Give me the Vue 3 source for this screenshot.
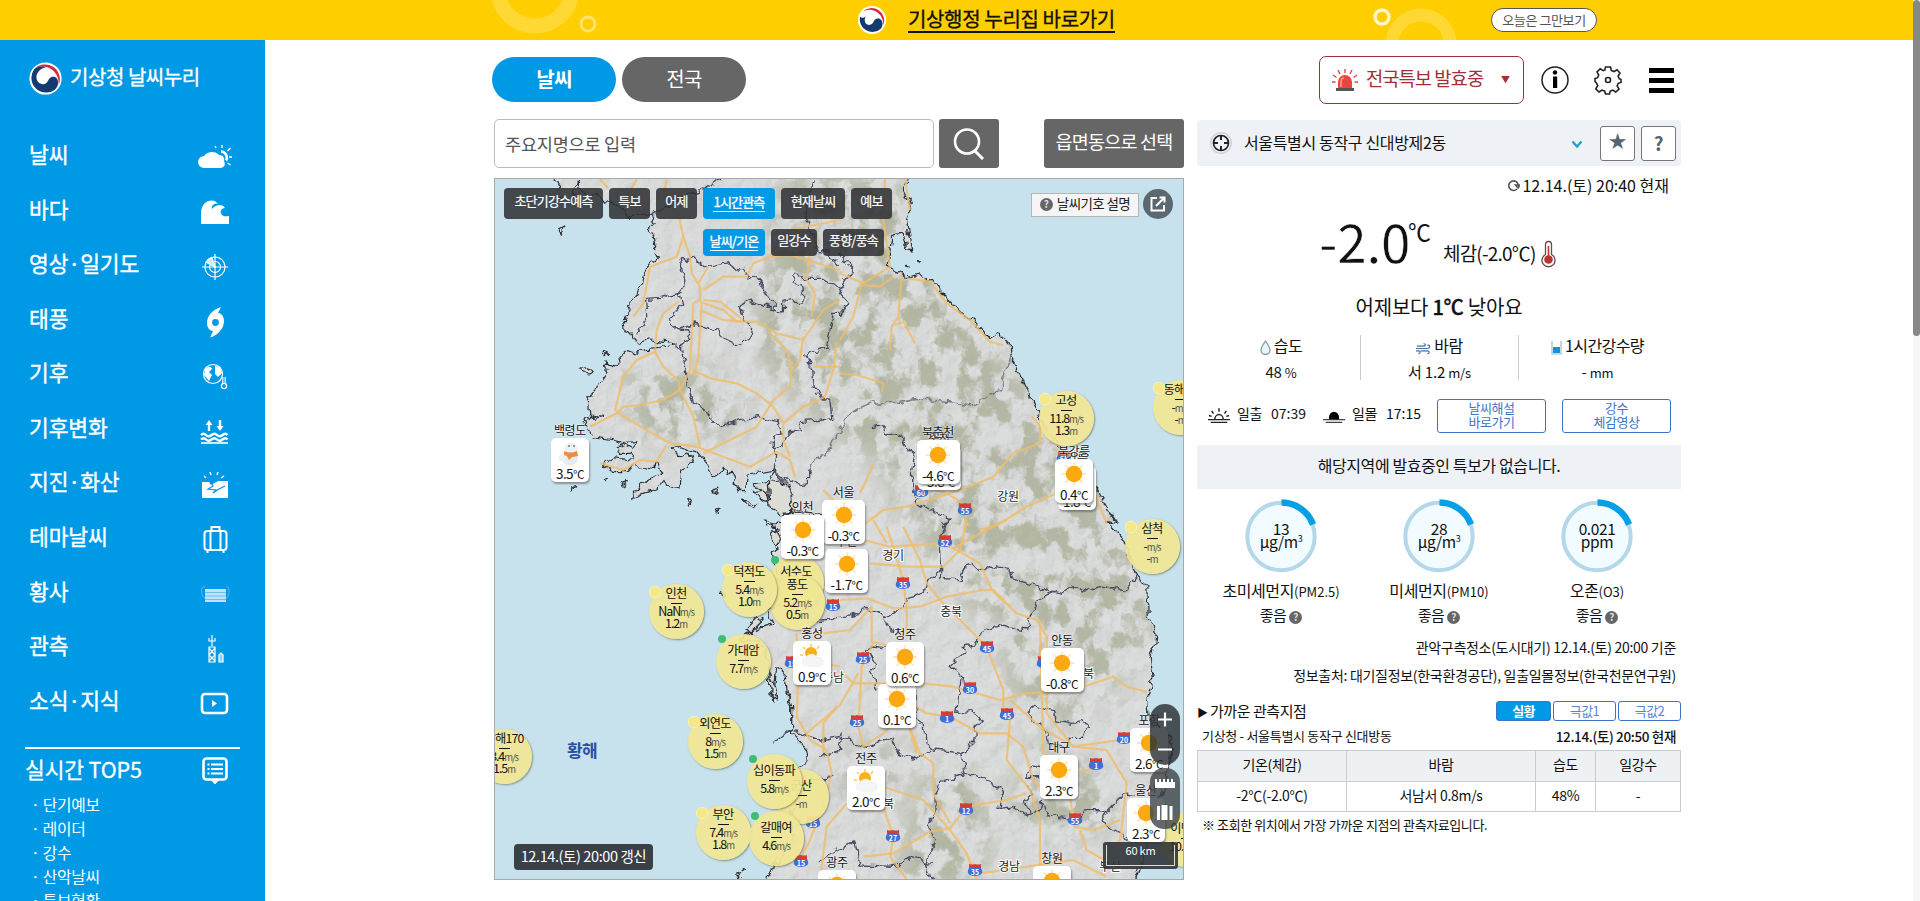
<script setup>
const menu = [
  ['날씨', 'weather'], ['바다', 'sea'], ['영상·일기도', 'radar'], ['태풍', 'typhoon'], ['기후', 'climate'],
  ['기후변화', 'change'], ['지진·화산', 'quake'], ['테마날씨', 'theme'], ['황사', 'dust'], ['관측', 'tower'], ['소식·지식', 'news'],
]
const top5 = ['단기예보', '레이더', '강수', '산악날씨', '특보현황']
const mapTabs = [['초단기강수예측', 99], ['특보', 41], ['어제', 41], ['1시간관측', 72], ['현재날씨', 64], ['예보', 41]]
const subTabs = [['날씨/기온', 62], ['일강수', 46], ['풍향/풍속', 61]]
const air = [
  { v: '13', u: 'μg/m', sup: '3', n: '초미세먼지', s: '(PM2.5)' },
  { v: '28', u: 'μg/m', sup: '3', n: '미세먼지', s: '(PM10)' },
  { v: '0.021', u: 'ppm', sup: '', n: '오존', s: '(O3)' },
]

// Each map line is traced in a 1/3 px quadrant grid; o is the quadrant origin on the page.
const NW = [490, 170], NE = [840, 170], SW = [490, 520], SE = [840, 520]
const tr = (o, s) => s.trim().split(/\s+/).map(p => {
  const [x, y] = p.split(',').map(Number)
  return (o[0] + x / 3).toFixed(1) + ',' + (o[1] + y / 3).toFixed(1)
}).join(' ')

const west =
  tr(NW, '195,20 210,50 195,62 203,82 240,88 262,50 265,35 275,65 300,72 330,75 345,95 380,100 400,125 420,145 440,132 470,135 497,140 475,180 490,200 495,225 492,240 505,265 480,285 460,310 455,345 440,370 420,400 412,430 400,450 405,480 425,490 430,505 445,520 480,510 530,515 550,520 540,528 480,535 440,550 415,540 395,560 375,585 345,575 352,605 325,640 312,665 298,690 303,738 345,742 315,748 300,735 280,765 310,800 370,810 400,818 440,815 432,835 410,822 385,830 388,850 430,850 425,868 370,860 335,880 370,905 415,905 430,885 480,900 500,880 512,910 455,940 425,985 500,955 525,925 530,950 570,960 575,900 610,880 600,850 570,860 550,840 565,830 620,845 650,880 670,920 685,915 700,895 725,910 745,965 765,965 775,915 855,900 835,930 785,940 830,970 850,1020 900,1035 905,1060') + ' ' +
  tr(SW, '850,10 870,60 850,100 860,160 880,250 830,270 850,310 790,330 750,360 810,370 840,430 835,490 850,540 860,440 885,460 890,510 905,560 905,640 950,690 955,720 920,740 930,800 900,900 910,960 850,1040 820,1095')
const east =
  tr(NE, '205,20 190,60 215,110 200,150 205,190 215,240 200,235 190,190 155,200 150,240 145,290 185,310 205,325 235,315 260,330 285,328 300,360 325,385 345,410 380,445 400,450 450,505 475,490 508,525 510,560 530,590 550,640 575,685 598,735 650,820 700,880 770,960 800,1010 835,1060') + ' ' +
  tr(SE, '800,5 850,60 870,110 890,160 920,200 925,290 948,340 945,370 930,410 940,470 920,540 925,600 985,640 1000,680 975,780 960,840 930,960 880,1095')
const land = west + ' ' + east.split(' ').reverse().join(' ')

const islands = [
  [NW, '265,600 285,590 310,605 300,612 280,605'], [NW, '342,545 355,550 345,560'], [NW, '205,180 222,170 212,190'],
  [NW, '340,930 355,925 350,935'], [NW, '395,940 415,935 400,947'], [NW, '665,965 685,950 680,970'], [NW, '590,992 603,990 597,1003'],
  [NW, '678,1020 690,1022 682,1030'], [NW, '755,990 800,1005 795,1015 765,1002'], [NW, '820,1050 860,1060 830,1065'],
  [NW, '242,950 260,947 245,957'], [NW, '835,935 870,930 900,960 902,1030 870,1035 840,1010'], [NW, '790,965 825,960 835,995 800,985'],
  [SW, '845,45 860,30 872,60 855,85'], [SW, '765,325 800,290 820,300 780,340'], [SW, '690,220 705,215 700,228'],
  [SW, '835,445 865,540 840,520'], [SW, '760,1045 768,1050 760,1055'], [SW, '740,1062 755,1065 745,1070'],
  [NE, '195,283 205,285 200,288'], [NE, '232,275 241,277 236,281'],
].map(([o, s]) => tr(o, s))

const borders = [
  [NW, '570,270 610,265 640,290 665,283 715,275 740,300 760,298 775,320 800,320 830,370 860,420 820,405 780,390 748,410 755,440 785,470 780,500 740,525 700,505 680,480 660,475 610,462 560,475 540,460 548,430 575,405 565,370 585,345 580,300 570,270'],
  [NW, '575,370 540,375 510,382 470,385 473,440 455,470 440,490'],
  [NW, '550,520 575,545 585,580 595,650 610,700 640,710 655,735 685,768 740,755 800,740 865,755 870,790 850,800 850,835 870,835 900,790 910,780 935,785 930,755 1000,750 1025,745 1020,690 1000,690 970,650 965,600 950,555 1010,530 1030,430 1050,430'],
  [NW, '860,425 880,425 882,390 905,385 920,400 940,400 935,350 905,335 915,312 950,325 1000,325 1050,360'],
  [NW, '560,475 590,480 597,505 575,520 575,545'],
  [NW, '690,28 640,60 590,75 550,105 500,125 480,137'],
  [NW, '970,28 945,130 970,200 985,245 1010,245 1050,290'],
  [NW, '855,840 850,900 880,925 930,945 955,940 957,900'], [NW, '850,905 900,950 905,1020 1000,1035 1050,1020'],
  [NE, '-5,250 40,300 10,340 0,365 25,400 0,430'],
  [NE, '95,770 125,765 140,795 180,790 195,830 225,855 215,900 215,960 235,1000 270,1020 330,1045 310,1080'],
  [SE, '310,0 320,20 300,60 305,150 305,175 360,180 375,135 395,130 420,155 460,140 510,145 515,175 560,190 640,215 670,220 700,200 730,213 780,200 820,210 850,210 890,165'],
  [SE, '305,150 260,185 255,215 200,235 190,265 135,295 105,270 75,265 30,290 -30,300 -100,310'], [SE, '135,295 145,325 165,335'],
  [SE, '640,215 600,235 575,275 560,330 530,325 490,315 420,335 415,370 370,378 375,400 330,435 365,470 355,530 350,580 390,575 430,600 405,625 405,660 365,700 330,695 280,690 255,670 250,610 230,600 225,520'],
  [SE, '140,385 100,378 80,385 105,430 95,460 110,510 135,490'],
  [SE, '-200,670 -150,630 -60,660 0,650 80,685 115,665 160,655 175,700 230,720 270,690'],
  [SE, '365,700 375,745 365,765 300,790 285,830 285,880 265,915 285,960 260,1030 275,1085'],
  [SE, '365,755 420,770 470,800 490,820 480,865 520,860 560,885 600,870 610,840 620,880 660,890 700,895 740,870 800,875 850,825 890,830'],
  [SE, '600,770 560,770 575,735 600,740'], [SE, '560,795 580,820 550,850 575,885'],
  [SE, '800,875 785,905 860,955 880,940'],
  [SE, '560,575 575,560 640,575 645,600 700,610 730,603 742,625 725,655 685,655 680,680 625,670 610,620 590,610 560,575'],
  [SE, '-60,1020 0,985 45,965 60,1035 180,1040 205,1010 270,1030'],
  [SW, '990,705 1040,700 1060,640'], [SW, '960,780 1010,775 1030,765'],
].map(([o, s]) => tr(o, s))
const dmz = tr(NW, '957,900 975,865 1005,855 1050,785') + ' ' + tr(NE, '0,780 20,740 60,715 90,700 180,697 240,687 300,692 400,705 430,685 480,660 490,620 510,560')

const roads = [
  [NW, '565,130 580,200 600,260 605,310 630,350 630,390 610,400 600,600 570,660 520,690 450,705 400,710 380,730 300,770'],
  [NW, '440,28 400,100'], [NW, '330,28 355,55'], [NW, '565,130 520,80 530,28'], [NW, '580,200 560,260 480,290 460,400 430,440'],
  [NW, '640,360 700,320 770,320 790,280 840,260 900,255 1050,300'], [NW, '625,340 655,290'], [NW, '840,255 900,180 1050,150'],
  [NW, '630,395 700,420 740,455 800,455 860,490 940,510 1000,420 1050,390'], [NW, '630,420 700,450 760,455'], [NW, '640,390 690,395 760,450'],
  [NW, '565,395 520,430 500,480 495,545 440,570 400,620 375,720 400,740 540,820 620,830 780,890 860,845 900,870 915,920'],
  [NW, '495,545 520,590 565,630 570,660 610,740 630,830'], [NW, '610,600 660,625 740,640 800,670 850,710 880,760 880,810 900,860'],
  [NW, '635,400 625,560 610,620'], [NW, '940,500 930,570 905,600 900,650 850,690 800,770 700,820 640,850'], [NW, '840,490 890,540 905,600'],
  [NW, '965,440 975,370 950,330 960,240'], [NW, '880,760 940,710 1005,680 1030,600 1040,520'], [NW, '970,590 1050,590'], [NW, '330,880 400,900 450,870 500,875 530,825'],
  [NE, '135,28 130,150 150,290 70,340 0,310'], [NE, '185,315 175,440 155,470 150,540'], [NE, '165,465 190,455 225,520'], [NE, '65,340 40,440 0,510'], [NE, '60,345 120,350 160,320'],
  [NE, '200,325 270,335 320,400 390,450 450,515 490,525'], [NE, '195,28 210,120'], [NE, '0,610 50,615 130,640 125,665'],
  [NE, '600,760 600,820 520,850 460,920 400,945 300,980 200,1010 130,1020 50,1080'], [NE, '575,740 650,820 760,960 800,1060'], [NE, '650,970 560,1010 480,1060 420,1080'], [NE, '240,945 330,975 380,1010 375,1080'], [NE, '100,885 60,970'],
  [SE, '500,0 440,30 340,85 300,70 150,80 70,60 0,60'], [SE, '380,0 360,90 310,140 200,140 90,130'], [SE, '190,20 240,120 260,190 300,240 370,310 440,380 490,510 490,560 510,600 500,720 570,810 600,900 600,1080'],
  [SE, '340,85 420,130 455,210 530,280 590,300 620,350 620,580 700,680 800,690 860,790 850,880 840,960 780,1030'],
  [SE, '0,240 80,235 160,265 240,260 320,230 430,210 460,210 510,260'], [SE, '140,20 190,180 200,270 200,340'], [SE, '100,0 140,70'],
  [SE, '-50,340 30,330 95,260 95,365 140,375'], [SE, '100,370 65,440 55,620 70,680 130,640 170,600 200,600 240,700 280,730 280,820 330,910'],
  [SE, '0,450 40,490 110,490 250,490 340,500 480,540 560,520 700,510 820,470 860,500 920,515'],
  [SE, '55,460 0,555 -100,640'], [SE, '160,520 260,580 330,590 420,640 500,640 550,680 580,780 600,800'],
  [SE, '510,540 600,620 700,680 840,660'], [SE, '600,300 610,700 700,760 780,740'], [SE, '130,800 250,840 330,930 380,1000 410,1080'], [SE, '70,1010 160,1000 270,935 330,925 380,860 500,840 560,820'],
  [SE, '230,700 190,560 140,500'], [SE, '20,850 -40,920 -60,1080'], [SE, '130,860 160,950 150,1010 200,1078'],
  [SE, '700,900 690,830 700,770'], [SE, '700,920 760,930 840,900'], [SE, '420,1060 560,1040 700,1020 800,1070'], [SE, '720,930 740,990 830,1040'],
  [SW, '920,340 925,460 920,590 960,660 1010,690 1025,760 1000,860 960,960 930,1020'], [SW, '1040,560 1000,610 1000,700'], [SW, '1050,440 960,420'], [NW, '1000,960 1050,1010'],
].map(([o, s]) => tr(o, s))

const shields = [
  [945, 541, '52'], [903, 583, '35'], [863, 658, '25'], [987, 647, '45'], [970, 688, '30'], [947, 717, '1'], [1007, 714, '45'], [857, 721, '25'],
  [1124, 738, '20'], [1096, 764, '1'], [966, 809, '12'], [1075, 819, '55'], [893, 836, '27'], [975, 870, '35'], [921, 491, '60'], [965, 509, '55'],
  [833, 605, '15'], [792, 662, '15'], [813, 822, '15'], [801, 861, '15'], [1044, 662, '5'], [1064, 457, '65'],
]
const regions = [[1008, 497, '강원'], [893, 556, '경기'], [951, 612, '충북'], [1083, 674, '경북'], [883, 804, '전북'], [833, 678, '충남'], [1009, 867, '경남'], [1110, 867, '부산']]
const buoys = [
  { x: 796, y: 582, n: '서수도', l: [], g: 1 }, { x: 797, y: 602, n: '풍도', l: [['5.2', 'm/s'], ['0.5', 'm']], h: 1 },
  { x: 749, y: 589, n: '덕적도', l: [['5.4', 'm/s'], ['1.0', 'm']] }, { x: 676, y: 611, n: '인천', l: [['NaN', 'm/s'], ['1.2', 'm']] },
  { x: 743, y: 661, n: '가대암', l: [['7.7', 'm/s']], g: 1 }, { x: 715, y: 741, n: '외연도', l: [['8', 'm/s'], ['1.5', 'm']] },
  { x: 504, y: 756, n: '남해170', l: [['3.4', 'm/s'], ['1.5', 'm']] }, { x: 801, y: 796, n: '군산', l: [['-', 'm']], h: 1 },
  { x: 774, y: 781, n: '십이동파', l: [['5.8', 'm/s']], g: 1 }, { x: 723, y: 832, n: '부안', l: [['7.4', 'm/s'], ['1.8', 'm']] },
  { x: 776, y: 838, n: '갈매여', l: [['4.6', 'm/s']], g: 1 }, { x: 1066, y: 418, n: '고성', l: [['11.8', 'm/s'], ['1.3', 'm']] },
  { x: 1180, y: 407, n: '동해78', l: [['-', 'm/s'], ['-', 'm']] }, { x: 1152, y: 546, n: '삼척', l: [['-', 'm/s'], ['-', 'm']] },
  { x: 1186, y: 839, n: '이덕서', l: [['10.1', 'm/s']], h: 1 },
]
const cities = [
  { x: 570, y: 438, n: '백령도', t: '3.5', i: 'snow' }, { x: 939, y: 446, n: '춘천', t: '-3.8', w: 43 }, { x: 938, y: 440, n: '북춘천', t: '-4.6', w: 43 },
  { x: 1077, y: 466, n: '강릉', t: '1.8' }, { x: 1074, y: 459, n: '북강릉', t: '0.4' },
  { x: 846.5, y: 549, n: '수원', t: '-1.7', w: 43 }, { x: 843.5, y: 500, n: '서울', t: '-0.3', w: 43 }, { x: 802.5, y: 515, n: '인천', t: '-0.3', w: 43 },
  { x: 812, y: 641, n: '홍성', t: '0.9', i: 'cloud' }, { x: 897, y: 684, n: '', t: '0.1' }, { x: 905, y: 642, n: '청주', t: '0.6' },
  { x: 1062, y: 648, n: '안동', t: '-0.8', w: 43 }, { x: 866, y: 766, n: '전주', t: '2.0', i: 'cloud' }, { x: 1059, y: 755, n: '대구', t: '2.3' },
  { x: 1149, y: 728, n: '포항', t: '2.6' }, { x: 1146, y: 798, n: '울산', t: '2.3' }, { x: 1052, y: 866, n: '창원', t: '3.1' }, { x: 837, y: 870, n: '광주', t: '2.2' },
]
const at = (p) => ({ left: p.x - 495 + 'px', top: p.y - 179 + 'px' })
</script>

<template>
  <div class="page">
    <header class="banner">
      <svg class="deco" width="1913" height="40" fill="none">
        <circle cx="535" cy="-11" r="37" stroke="#ffd833" stroke-width="15" /><circle cx="588" cy="24" r="7" stroke="#ffe36e" stroke-width="3" />
        <circle cx="1382" cy="17" r="7" stroke="#fff6ce" stroke-width="3.400" /><circle cx="1421" cy="44" r="29" stroke="#ffd833" stroke-width="13" />
      </svg>
      <svg class="blogo" viewBox="0 0 40 40"><circle cx="20" cy="20" r="20" fill="#fff" /><circle cx="20" cy="20" r="18" fill="#fff" /><path d="M6 9A18 18 0 0 1 36 28C37 17 30 8 21 6 15 4.500 9 6 6 9Z" fill="#d7263d" /><path d="M3 15A18 18 0 0 0 33 32C38 24 33 16 27 18c-6 2-4 9-11 9-6 0-8-7-5-12-4 3-6 2-8 0Z" fill="#143a70" /></svg>
      <span class="btitle">기상행정 누리집 바로가기</span>
      <button class="today">오늘은 그만보기</button>
    </header>

    <div class="body">
      <aside class="side">
        <div class="brand">
          <svg viewBox="0 0 40 40" width="33" height="33"><circle cx="20" cy="20" r="19.500" fill="#fff" /><path d="M6 9A18 18 0 0 1 36 28C37 17 30 8 21 6 15 4.500 9 6 6 9Z" fill="#d7263d" /><path d="M6 9A18 18 0 0 0 31 34C39 27 35 16 28 18c-6 2-4 9-11 9-6 0-10-7-7-13 2-4 6-7 11-8C15 4.500 9 6 6 9Z" fill="#143a70" /></svg>
          <span>기상청 날씨누리</span>
        </div>
        <nav>
          <a v-for="[t, k] in menu" :key="k">
            <span>{{ t }}</span>
            <svg viewBox="0 0 36 32" width="36" height="32" fill="none" stroke="#fff" stroke-width="2">
              <g v-if="k === 'weather'"><path d="M7 27a6 6 0 0 1 0-12 9 8 0 0 1 15-1c4 0 6 3 5 6 2 4 0 7-4 7Z" fill="#fff" stroke="none" /><path d="M24 10.500a6 6 0 0 1 5 9" stroke-width="2.600" /><path d="M25 7V4M30.500 10l3-3M32 16h3M30.500 22l3 2M19 7l-1-2" stroke-width="1.400" /></g>
              <path v-else-if="k === 'sea'" d="M4 28V16C5 7 11 3 18 5l3 3c-3-1-7 1-6 5 4-5 11-5 13-1-3 0-6 3-3 7 2 2 5 1 7 1v8Z" fill="#fff" stroke="none" />
              <g v-else-if="k === 'radar'" stroke-width="1.200"><circle cx="18" cy="17" r="10" /><circle cx="18" cy="17" r="5.500" /><path d="M18 4v26M5 17h26" /><path d="M18 17 9 12c2-3 4-4 6-4Z" fill="#cfeafa" /></g>
              <g v-else-if="k === 'typhoon'" stroke="none"><path d="M24 2C15 5 10 11 10 18c0 6 4 8 6 8l-3 7c10-4 14-11 14-17 0-5-3-8-6-8Z" fill="#fff" /><circle cx="18.500" cy="17.500" r="3.400" fill="#0099e5" /></g>
              <g v-else-if="k === 'climate'"><circle cx="16" cy="15" r="9.500" stroke-width="1.200" /><path d="M8 10c3-3 6-3 7 0l-3 3 3 3-3 6-5-6ZM18 7l5 1 2 6-4 4-3-3Z" fill="#fff" stroke="none" /><path d="M27 18v8" stroke-width="3.500" /><path d="M27 18v8" stroke="#0099e5" stroke-width="1.200" /><circle cx="27" cy="27" r="2.600" stroke-width="1.200" fill="#0099e5" /></g>
              <g v-else-if="k === 'change'"><path d="M12 17V9M23 6v7" stroke-width="2.400" /><path d="M8.500 11 12 6l3.500 5ZM19.500 12l3.500 5 3.500-5Z" fill="#fff" stroke="none" /><path d="M4 21q2.500-2.500 5 0t5.500 0 5.500 0 5.500 0 5 0M4 25.500q2.500-2.500 5 0t5.500 0 5.500 0 5.500 0 5 0" stroke-width="2.400" /><path d="M4 29h27" stroke-width="1.600" /></g>
              <g v-else-if="k === 'quake'"><path d="M5 14h7l2 3 7-4h10v17H5Z" fill="#fff" stroke="none" /><path d="m13 13 3 5-5 3 8 1-3 3 6-4 6-3" stroke="#0099e5" stroke-width="1.200" /><path d="m9 10-2-2M14 7l-1-3M20 7l1-3M24 10l3-2" stroke-width="1.400" /></g>
              <g v-else-if="k === 'theme'"><rect x="7.500" y="8" width="22" height="19" rx="3" /><path d="M13.500 8v19M23.500 8v19M14.500 8V4h8v4M10.500 28v2M26.500 28v2" /></g>
              <g v-else-if="k === 'dust'"><path d="M8 12h21v13H8Z" fill="#bfe3f8" stroke="none" /><path d="M8 15.500h21M8 19h21M8 22.500h21" stroke="#6ebfee" stroke-width="1" /><path d="M8 10c-5-3-4 11 0 11M29 10c4-3 4 11 0 11" stroke="#5bb8ee" stroke-width="1" /></g>
              <g v-else-if="k === 'tower'" stroke-width="1.200"><path d="M15 3v11M12 6v3h6V6M12 15h6v15h-6ZM12 16l6 7-6 6M18 16l-6 7 6 6" /><path d="M22 30v-7l2-2 2 2v7Z" fill="#8fd0f5" /></g>
              <g v-else><rect x="5" y="8" width="25" height="19" rx="3" stroke-width="2.600" /><path d="m15 14 5 3.500-5 3.500Z" fill="#fff" stroke="none" /></g>
            </svg>
          </a>
        </nav>
        <div class="top5">
          <div class="tt"><span>실시간 TOP5</span>
            <svg width="28" height="28" viewBox="0 0 28 28" fill="none" stroke="#fff" stroke-width="2.600"><rect x="2.500" y="1.500" width="23" height="21" rx="3" /><path d="m10.500 23 3.500 4 3.500-4Z" fill="#fff" stroke-width="1" /><path d="M6.500 7.500h2M6.500 12h2M6.500 16.500h2M10 7.500h12M10 12h12M10 16.500h12" stroke-width="2.200" /></svg>
          </div>
          <p v-for="t in top5" :key="t">· {{ t }}</p>
        </div>
      </aside>

      <main>
        <div class="topbar">
          <button class="tab on">날씨</button><button class="tab">전국</button>
          <div class="alert">
            <svg width="28" height="24" viewBox="0 0 28 24"><path d="M7 20v-6a7 7 0 0 1 14 0v6Z" fill="#e8473f" /><path d="M10 19v-5c0-3 2-4 3-4" stroke="#ff9d8f" stroke-width="1.500" fill="none" /><rect x="5" y="20" width="18" height="3" fill="#555" /><path d="M14 1v4M7 2l2 4M21 2l-2 4M2 7l3.500 2.500M26 7l-3.500 2.500M1 14h3.500M23.500 14H27" stroke="#d64b45" stroke-width="1.400" /></svg>
            <span>전국특보 발효중</span><i>▼</i>
          </div>
          <svg class="ic1" width="30" height="30" viewBox="0 0 30 30"><circle cx="15" cy="15" r="13" fill="none" stroke="#222" stroke-width="1.500" /><circle cx="15" cy="7.500" r="2.200" /><path d="M13 11.500h4.200V23H13Z" /></svg>
          <svg class="ic2" width="30" height="30" viewBox="0 0 30 30" fill="none" stroke="#222" stroke-width="1.600"><path d="M12.500 2h5l.8 3.500 2.700 1.100 3-1.900 3 3.300-1.900 3 1.100 2.700L28 14.500v3l-2.800.8-1.100 2.700 1.900 3-3.200 3-3-1.900-2.500 1.100-.8 2.800h-4l-.8-2.800-2.700-1.100-3 1.900-3.200-3.200 1.900-3-1.100-2.500L2 16.500v-3l2.600-.8L5.700 10 4 7l3.200-3.200 3 1.900 1.700-.7Z" /><circle cx="15" cy="15" r="2.500" /></svg>
          <div class="burger"><b /><b /><b /></div>
        </div>

        <div class="cols">
          <section class="left">
            <div class="search">
              <div class="inp">주요지명으로 입력</div>
              <button class="sb"><svg width="32" height="32" viewBox="0 0 32 32" fill="none" stroke="#fff" stroke-width="2.600"><circle cx="14" cy="13.500" r="12" /><path d="m22 23 8 8" stroke-width="3" /></svg></button>
              <button class="sel">읍면동으로 선택</button>
            </div>

            <div class="map">
              <svg class="geo" viewBox="495 179 688 700" width="688" height="700">
                <defs>
                  <filter id="jag" filterUnits="userSpaceOnUse" x="480" y="170" width="720" height="720" color-interpolation-filters="sRGB"><feTurbulence type="fractalNoise" baseFrequency=".13" numOctaves="2" seed="4" /><feDisplacementMap in="SourceGraphic" scale="9" xChannelSelector="R" yChannelSelector="G" /></filter>
                  <filter id="relief" filterUnits="userSpaceOnUse" x="480" y="170" width="720" height="720"><feTurbulence type="fractalNoise" baseFrequency=".06 .055" numOctaves="6" seed="11" result="n" /><feDiffuseLighting in="n" surfaceScale="2.200" lighting-color="#e4e6e6"><feDistantLight azimuth="225" elevation="60" /></feDiffuseLighting></filter>
                  <filter id="forest" filterUnits="userSpaceOnUse" x="480" y="170" width="720" height="720" color-interpolation-filters="sRGB"><feTurbulence type="fractalNoise" baseFrequency=".05 .04" numOctaves="6" seed="23" /><feColorMatrix values="0 0 0 0 .63  0 0 0 0 .65  0 0 0 0 .54  6 0 0 0 -2.750" result="c" /><feComposite in="c" in2="SourceGraphic" operator="in" /></filter>
                  <filter id="soft" filterUnits="userSpaceOnUse" x="480" y="170" width="720" height="720"><feGaussianBlur stdDeviation="14" /></filter>
                  <clipPath id="landclip"><polygon :points="land" /></clipPath>
                </defs>
                <rect x="495" y="179" width="688" height="700" fill="#c7e2ec" />
                <g filter="url(#jag)">
                  <g clip-path="url(#landclip)">
                    <rect x="480" y="170" width="720" height="720" fill="#dadbda" />
                    <rect x="480" y="170" width="720" height="720" filter="url(#relief)" opacity=".45" />
                    <g filter="url(#forest)" opacity=".75"><path filter="url(#soft)" d="M780 175h120l30 70 90 130 130 200 10 70-90 20-120-70-70-130-60-40-70-80ZM930 760l60 20-10 110-90 0 20-70ZM1000 600l110-10 20 80-70 60-50-30ZM620 370l80-10 50 50-60 40-60-20ZM1030 740l90 40-20 60-90-20ZM850 740l60 10-20 60-50-10Z" fill="#000" opacity=".9" /></g>
                  </g>
                  <polyline :points="west" class="coast" /><polyline :points="east" class="coast" />
                  <polygon v-for="(p, i) in islands" :key="'i' + i" :points="p" class="isle" />
                  <polyline v-for="(p, i) in borders" :key="'b' + i" :points="p" class="border" />
                  <polyline :points="dmz" class="dmz" />
                </g>
                <g class="road"><polyline v-for="(p, i) in roads" :key="'r' + i" :points="p" /></g>
                <g v-for="([x, y, n], i) in shields" :key="'s' + i" class="shield">
                  <path :d="`M${x - 6} ${y - 2}h12q3 5-1 7-5 2-10 0-4-2-1-7Z`" fill="#3d6fd6" /><path :d="`M${x - 6} ${y - 6}q3 1 6 0 3 1 6 0v4h-12Z`" fill="#d83a34" />
                  <text :x="x" :y="y + 4.500">{{ n }}</text>
                </g>
                <text v-for="([x, y, n], i) in regions" :key="'t' + i" :x="x" :y="y + 4" class="reg">{{ n }}</text>
                <text x="582" y="757" class="seaname">황해</text>
              </svg>

              <div v-for="(b, i) in buoys" :key="'k' + i" class="buoy" :class="{ green: b.g, hide: b.h, one: b.l.length < 2 }" :style="at(b)">
                <span class="bn">{{ b.n }}</span><hr v-if="b.l.length">
                <span v-for="(l, j) in b.l" :key="j" class="bv">{{ l[0] }}<small>{{ l[1] }}</small></span>
              </div>
              <div v-for="(c, i) in cities" :key="'c' + i" class="city" :style="at(c)">
                <span class="cn">{{ c.n }}</span>
                <div class="card" :class="{ wide: c.w }">
                  <svg width="26" height="26" viewBox="0 0 26 26">
                    <g v-if="c.i === 'snow'"><ellipse cx="13" cy="19" rx="8" ry="6.500" fill="#e4ecf1" /><circle cx="14" cy="9" r="6.500" fill="#edf1f3" /><path d="M7 11q6 3 13 0l1 5q-4 1-6 1l-3 3-2-4-3-1Z" fill="#f28b3c" /><circle cx="12" cy="6" r="1" fill="#777" /><circle cx="17" cy="6" r="1" fill="#777" /><circle cx="5" cy="18" r="3.500" fill="#edf1f3" /></g>
                    <g v-else-if="c.i === 'cloud'"><circle cx="12" cy="10" r="6" fill="#fbaf1c" /><path d="M12 1v3M4 4l2 2M1 12h3M20 3l-2 3" stroke="#fbc860" stroke-width="1.500" /><path d="M6 23a4.500 4.500 0 0 1 1-8.500c3-5 9-4 11 0 5-1 7 3 6 6 0 2-2 3-4 3Z" fill="#f3f5f6" stroke="#e6e9eb" stroke-width=".5" /></g>
                    <g v-else><path d="M13 1v24M1 13h24M4.500 4.500l17 17M21.500 4.500l-17 17" stroke="#fbe0ae" stroke-width="1.300" /><circle cx="13" cy="13" r="8.200" fill="#fba90f" /></g>
                  </svg>
                  <span class="ct">{{ c.t }}<i>℃</i></span>
                </div>
              </div>

              <div class="mtabs"><button v-for="([t, w], i) in mapTabs" :key="t" :class="{ on: i === 3 }" :style="{ width: w + 'px' }"><span>{{ t }}</span></button></div>
              <div class="mtabs sub"><button v-for="([t, w], i) in subTabs" :key="t" :class="{ on: i === 0 }" :style="{ width: w + 'px' }"><span>{{ t }}</span></button></div>
              <button class="legend"><em>?</em>날씨기호 설명</button>
              <button class="ext"><svg width="16" height="16" viewBox="0 0 16 16" fill="none" stroke="#fff" stroke-width="2"><path d="M7 2H1.500v12.500H14V9M6 10l8-8M9.500 1.500h5v5" /></svg></button>
              <div class="stamp">12.14.(토) 20:00 갱신</div>
              <div class="zoom"><svg width="30" height="126" viewBox="0 0 30 126"><rect width="30" height="61" rx="15" fill="#2b2f33" opacity=".82" /><rect y="64" width="30" height="61" rx="14" fill="#3e4347" opacity=".8" /><path d="M8 15.500h14M15 8.500v14M8 45.500h14" stroke="#fff" stroke-width="2.200" /><path d="M5 75h2v3h2v-3h2v3h2v-3h2v3h2v-3h2v3h2v-3h2v3h2v6H5ZM7 102h3v14H7ZM11.500 101h6v15h-6ZM19.500 102h3v14h-3Z" fill="#fff" /></svg></div>
              <div class="scale"><span>60 km</span></div>
            </div>
          </section>

          <section class="right">
            <div class="loc">
              <svg width="22" height="22" viewBox="0 0 22 22" fill="none" stroke="#222" stroke-width="2"><circle cx="11" cy="11" r="10.300" stroke="#cfd3d8" stroke-width="1.400" /><circle cx="11" cy="11" r="7.500" stroke-width="1.700" /><path d="M11 3.500v4.500M11 14v4.500M3.500 11h4.500M14 11h4.500" /></svg>
              <span>서울특별시 동작구 신대방제2동</span>
              <svg class="chev" width="12" height="9" viewBox="0 0 12 9" fill="none" stroke="#1da0c8" stroke-width="2.200"><path d="m1.500 1.500 4.500 5 4.500-5" /></svg>
              <button class="star">★</button><button>?</button>
            </div>
            <div class="date"><svg width="13" height="13" viewBox="0 0 13 13" fill="none" stroke="#555" stroke-width="1.600"><path d="M10 10A4.800 4.800 0 1 1 11.300 6M8.500 6h4.500l-2 3Z" /></svg>12.14.(토) 20:40 현재</div>
            <div class="temp"><b>-2.0</b><sup>℃</sup><span>체감(-2.0℃)</span>
              <svg width="17" height="28" viewBox="0 0 17 28"><path d="M5.500 14.500V4.500a3 3 0 0 1 6 0v10a6.500 6.500 0 1 1-6 0Z" fill="#fff" stroke="#70484a" stroke-width="1.300" /><circle cx="8.500" cy="19.500" r="4.300" fill="#b7372e" /><path d="M8.500 6v12" stroke="#b7372e" stroke-width="1.600" /></svg>
            </div>
            <div class="yes">어제보다 <b>1℃</b> 낮아요</div>
            <div class="stats">
              <div><p><svg width="11" height="15" viewBox="0 0 11 15"><path d="M5.500 1C9 6 10 8 10 10a4.500 4.500 0 0 1-9 0c0-2 1-4 4.500-9Z" fill="#e9f4fa" stroke="#7f98a8" stroke-width="1.300" /></svg> 습도</p><p class="v">48 <small>%</small></p></div>
              <div><p><svg width="15" height="13" viewBox="0 0 16 13" fill="none" stroke="#456d96" stroke-width="1.200"><path d="M1 4h7c3 0 2-3 0-2.500M0 6.500h12c4 0 3-4.500 0-3.500M5 9h7c3 0 2.500 3.500 0 3M0 9h2.500c3 0 2 3.500 0 3" /></svg> 바람</p><p class="v">서 1.2 <small>m/s</small></p></div>
              <div><p><svg width="11" height="14" viewBox="0 0 11 14"><path d="M1 0v13h9V0" fill="none" stroke="#9fbad0" stroke-width="1.200" /><path d="M2 6h7v6H2Z" fill="#168fd8" /></svg> 1시간강수량</p><p class="v">- <small>mm</small></p></div>
            </div>
            <div class="sun">
              <svg width="22" height="17" viewBox="0 0 24 18" fill="none" stroke="#222" stroke-width="1.600"><path d="M0 13.500h24M3 16.500h18" /><path d="M7.500 13a4.500 5 0 0 1 9 0M12 5V1M6 7 4 4M18 7l2-3M4 10l-3-1M20 10l3-1" /></svg>
              <span>일출</span><span class="tm">07:39</span>
              <svg class="s2" width="22" height="17" viewBox="0 0 24 18"><path d="M0 13.500h24M3 16.500h18" stroke="#444" stroke-width="1.600" /><path d="M6.500 13V11a5.500 6 0 0 1 11 0v2Z" /></svg>
              <span>일몰</span><span class="tm">17:15</span>
              <button>날씨해설<br>바로가기</button><button class="b2">강수<br>체감영상</button>
            </div>
            <div class="strip">해당지역에 발효중인 특보가 없습니다.</div>
            <div class="air">
              <div v-for="a in air" :key="a.n">
                <div class="ring">
                  <svg width="74" height="74" viewBox="0 0 74 74" fill="none"><circle cx="37" cy="37.500" r="33.700" fill="#f2fbff" stroke="#b4d7e9" stroke-width="4" /><path d="M37.500 3.600A33.500 33.500 0 0 1 69 25.500" stroke="#04a0e6" stroke-width="6.500" /></svg>
                  <p>{{ a.v }}<br>{{ a.u }}<sup>{{ a.sup }}</sup></p>
                </div>
                <p class="an">{{ a.n }}<small>{{ a.s }}</small></p>
                <p class="ag">좋음<em>?</em></p>
              </div>
            </div>
            <p class="src">관악구측정소(도시대기) 12.14.(토) 20:00 기준</p>
            <p class="src">정보출처: 대기질정보(한국환경공단), 일출일몰정보(한국천문연구원)</p>
            <div class="near"><span><i>▶</i>가까운 관측지점</span><div><button class="on">실황</button><button>극값1</button><button>극값2</button></div></div>
            <div class="stn"><span>기상청 - 서울특별시 동작구 신대방동</span><b>12.14.(토) 20:50 현재</b></div>
            <table>
              <thead><tr><th class="w1">기온(체감)</th><th class="w2">바람</th><th class="w3">습도</th><th>일강수</th></tr></thead>
              <tbody><tr><td>-2℃(-2.0℃)</td><td>서남서 0.8m/s</td><td>48%</td><td>-</td></tr></tbody>
            </table>
            <p class="note">※ 조회한 위치에서 가장 가까운 지점의 관측자료입니다.</p>
          </section>
        </div>
      </main>
    </div>
    <div class="sbar"><i /></div>
  </div>
</template>

<style>
html, body { overflow: hidden; background: #fff; }
</style>
<style scoped>
.page { position: relative; width: 1920px; height: 901px; overflow: hidden; font-family: "Noto Sans CJK KR", "Noto Sans", sans-serif; color: #111; line-height: 1; letter-spacing: -.6px; }
.page * { box-sizing: border-box; }
p { margin: 0; }
button { font: inherit; letter-spacing: inherit; border: 0; padding: 0 0 2px; color: inherit; display: flex; align-items: center; justify-content: center; flex: none; white-space: nowrap; }
svg { flex: none; }
i, em { font-style: normal; }
.banner { height: 40px; background: #ffce00; position: relative; display: flex; align-items: center; padding-left: 858px; }
.deco { position: absolute; left: 0; top: 0; }
.blogo { width: 28px; height: 28px; z-index: 1; }
.btitle { margin-left: 22px; width: 207px; height: 25px; border-bottom: 2px solid #111; font-size: 20px; letter-spacing: -.350px; -webkit-text-stroke: .35px #111; line-height: 22px; white-space: nowrap; z-index: 1; }
.today { margin-left: 376px; width: 106px; height: 24px; border: 1px solid #555; border-radius: 12px; background: #fff; color: #555; font-size: 13px; letter-spacing: -.4px; z-index: 1; }
.sbar { position: absolute; right: 0; top: 0; width: 7px; height: 901px; background: #f7f7f7; }
.sbar i { display: block; height: 336px; background: #888; border-radius: 4px; }
.body { display: flex; height: 861px; }
.side { width: 265px; background: #0099e5; color: #fff; flex: none; }
.brand { display: flex; align-items: center; padding-left: 29px; gap: 8px; height: 76px; font-size: 20px; letter-spacing: -.45px; -webkit-text-stroke: .35px #fff; }
.brand svg { margin-top: 1px; }
.brand span { margin-top: -2px; }
nav { padding-top: 12.700px; }
nav a { display: flex; align-items: center; justify-content: space-between; height: 54.550px; padding: 0 32px 0 29px; font-size: 21.500px; letter-spacing: -.15px; -webkit-text-stroke: .4px #fff; }
nav a span { margin-top: -4px; }
nav svg { -webkit-text-stroke: 0; margin-top: 2px; }
.top5 { margin: 18px 25px 0; border-top: 2px solid #fff; }
.tt { display: flex; justify-content: space-between; align-items: center; height: 43px; font-size: 21.500px; letter-spacing: -.15px; -webkit-text-stroke: .3px #fff; padding-right: 11px; }
.tt span { margin-top: -2px; }
.tt svg { margin-top: 1px; }
.top5 p { font-size: 15.800px; height: 24.200px; line-height: 25px; padding-left: 6px; letter-spacing: -.3px; }

main { padding-left: 227px; flex: none; width: 1500px; }
.topbar { display: flex; align-items: flex-start; height: 79px; padding-top: 17px; }
.tab { width: 124px; height: 45px; border-radius: 23px; background: #666; color: #fff; font-size: 20px; margin-right: 6px; }
.tab.on { background: #0099e5; font-weight: 700; }
.alert { width: 205px; height: 48px; margin-top: -1px; border: 1px solid #a32f39; border-radius: 7px; margin-left: 567px; display: flex; align-items: center; color: #a32f39; font-size: 18.800px; padding-left: 11px; white-space: nowrap; letter-spacing: -1px; }
.alert span { margin: -3px 0 0 7px; width: 118px; }
.alert i { font-size: 9px; margin: -2px 0 0 17px; }
.ic1 { margin: 8px 0 0 16px; }
.ic2 { margin: 8px 0 0 23px; }
.burger { width: 25px; height: 25px; display: flex; flex-direction: column; justify-content: space-between; margin: 11px 0 0 26px; }
.burger b { height: 5px; background: #000; }
.cols { display: flex; padding-left: 2px; }
.left { width: 690px; flex: none; }
.search { display: flex; height: 49px; }
.inp { width: 440px; border: 1px solid #bbb; border-radius: 5px; font-size: 17.500px; color: #555; padding: 0 10px; display: flex; align-items: center; letter-spacing: -.2px; }
.sb { width: 60px; background: #666; margin-left: 5px; border-radius: 3px; padding: 0; }
.sel { width: 140px; background: #666; margin-left: auto; color: #fff; border-radius: 3px; font-size: 18.500px; letter-spacing: -.8px; padding-bottom: 4px; }
.map { position: relative; margin-top: 10px; height: 702px; border: 1px solid #a5a9ab; overflow: hidden; background: #c7e2ec; }
.geo { display: block; }
.coast, .isle, .border, .dmz { fill: none; stroke: #2c3038; stroke-width: 1.250; stroke-linejoin: round; }
.isle { fill: #dcdcd6; }
.border { stroke: #454a62; stroke-width: 1.350; }
.dmz { stroke: #777c86; stroke-width: 1.400; }
.road polyline { fill: none; stroke: #efbd68; stroke-width: 2.200; opacity: .8; stroke-linejoin: round; }
.shield text { font-size: 7px; font-weight: 700; fill: #fff; text-anchor: middle; letter-spacing: 0; }
.reg { font-size: 12px; text-anchor: middle; fill: #222; stroke: #fff; stroke-width: 2px; paint-order: stroke; letter-spacing: -.3px; }
.seaname { font-size: 17px; font-weight: 700; fill: #2b4f9e; text-anchor: middle; }
.buoy { position: absolute; width: 55px; height: 55px; margin: -27px 0 0 -27.500px; border-radius: 50%; background: rgba(240, 230, 149, .93); box-shadow: 1px 1px 2px rgba(90, 90, 60, .6); display: flex; flex-direction: column; align-items: center; padding-top: 2px; white-space: nowrap; }
.buoy::before { content: ""; position: absolute; left: 0; top: 2px; width: 10px; height: 10px; border-radius: 5px; background: #f5e88c; border: 1px solid #faf0ae; }
.buoy.green::before { background: #3fbd77; border: 0; top: 1px; width: 8px; height: 8px; left: 2px; }
.buoy.hide::before { display: none; }
.buoy.one { padding-top: 9px; }
.bn { font-size: 12.200px; line-height: 15px; letter-spacing: -.7px; }
.buoy hr { width: 11px; border: 0; height: 1px; background: #111; margin: 2px 0 2px; }
.bv { font-size: 12.500px; line-height: 10.500px; letter-spacing: -1.100px; }
.bv small { font-size: 9.500px; color: #555; }
.city { position: absolute; width: 0; }
.cn { position: absolute; left: -30px; width: 60px; top: -14px; font-size: 12px; text-align: center; text-shadow: 0 0 2px #fff, 0 0 2px #fff; letter-spacing: -.3px; }
.card { width: 38px; height: 44px; margin-left: -19px; border-radius: 5px; background: #fff; box-shadow: 1px 2px 2px rgba(80, 80, 80, .55); display: flex; flex-direction: column; align-items: center; padding-top: 2px; position: relative; }
.card.wide { width: 43px; margin-left: -21.500px; }
.ct { font-size: 13.500px; line-height: 14px; letter-spacing: -.6px; white-space: nowrap; }
.ct i { font-size: 11.500px; }
.mtabs { position: absolute; left: 9px; top: 9px; display: flex; gap: 6px; }
.mtabs button { height: 31px; border-radius: 4px; background: rgba(45, 47, 50, .86); color: #fff; font-size: 13px; letter-spacing: -.8px; -webkit-text-stroke: .2px #fff; }
.mtabs span { padding: 0 0 3px; border-bottom: 1px solid transparent; }
.mtabs .on { background: #0099e5; -webkit-text-stroke: .35px #fff; padding-bottom: 0; }
.mtabs .on span { border-color: #fff; }
.mtabs.sub { left: 208px; top: 50px; }
.mtabs.sub button { height: 27px; }
.legend { position: absolute; left: 536px; top: 14px; width: 108px; height: 24px; border: 1px solid #b5b5b5; background: #f5f5f5; font-size: 13.500px; color: #222; }
em { width: 13px; height: 13px; border-radius: 50%; background: #666; color: #ddd; font-size: 10px; font-weight: 700; display: inline-flex; align-items: center; justify-content: center; margin-right: 4px; letter-spacing: 0; }
.ext { position: absolute; left: 648px; top: 10px; width: 30px; height: 30px; border-radius: 50%; background: #5b6870; padding: 0; }
.stamp { position: absolute; left: 19px; top: 665px; width: 139px; height: 26px; border-radius: 4px; background: #3a4045; color: #fff; font-size: 14.500px; display: flex; align-items: center; justify-content: center; letter-spacing: -.4px; white-space: nowrap; padding-bottom: 2px; }
.zoom { position: absolute; left: 655px; top: 525px; }
.scale { position: absolute; left: 608px; top: 663px; width: 75px; height: 27px; border-radius: 3px; background: rgba(48, 52, 56, .9); padding: 3px; }
.scale span { display: block; height: 21px; border: 1px solid #ddd; border-top: 0; color: #fff; font-size: 11px; text-align: center; letter-spacing: -.2px; line-height: 10px; }

.right { width: 484px; margin-left: 13px; padding-top: 1px; flex: none; }
.loc { height: 46px; background: #eef1f6; border-radius: 3px; display: flex; align-items: center; padding: 0 5px 0 13px; font-size: 16px; letter-spacing: -.35px; }
.loc span { margin: -2px 0 0 12px; flex: 1; }
.chev { margin: 2px 11px 0 0; }
.loc button { width: 35px; height: 35px; border: 1px solid #777; border-radius: 3px; background: #fff; margin-left: 6px; font-size: 19px; font-weight: 700; color: #56656f; }
.loc .star { font-size: 22px; font-family: "DejaVu Sans", sans-serif; }
.date { height: 40px; display: flex; align-items: center; justify-content: flex-end; gap: 2px; padding: 0 12px 2px 0; font-size: 16px; letter-spacing: 0; }
.temp { height: 74px; display: flex; align-items: flex-start; padding-left: 122px; }
.temp b { font: 400 53px/52px "Noto Sans CJK KR", sans-serif; letter-spacing: -.2px; width: 89px; margin-top: 8px; white-space: nowrap; -webkit-text-stroke: .5px #fff; }
.temp sup { font-size: 23px; margin-top: 13px; width: 35px; line-height: 24px; }
.temp span { font-size: 19px; margin-top: 37px; width: 95px; white-space: nowrap; letter-spacing: -.8px; line-height: 20px; }
.temp svg { margin: 34px 0 0 2px; }
.yes { height: 55px; text-align: center; font-size: 20px; line-height: 53px; letter-spacing: -.2px; }
.yes b { font-weight: 500; -webkit-text-stroke: .4px #111; }
.stats { display: flex; height: 45px; padding-left: 5px; }
.stats div { width: 158px; text-align: center; font-size: 16px; padding-top: 2px; }
.stats div + div { border-left: 1px solid #ccc; }
.stats p svg { vertical-align: -3px; }
.stats .v { font-size: 15px; margin-top: 9px; letter-spacing: -.2px; }
.v small { font-size: 13px; }
.sun { height: 65px; display: flex; align-items: center; padding-left: 11px; font-size: 14px; white-space: nowrap; padding-top: 6px; letter-spacing: -.5px; }
.sun span { margin: -5px 0 0 7px; width: 25px; }
.sun .tm { width: 37px; margin-left: 9px; letter-spacing: 0; }
.sun svg { margin-bottom: 0; }
.sun .s2 { margin-left: 15px; }
.sun button { width: 109px; height: 34px; border: 1px solid #3d74c9; border-radius: 3px; background: #fff; color: #3d74c9; font-size: 13px; line-height: 14px; margin: 0 0 0 14px; text-align: center; }
.sun .b2 { margin-left: 16px; }
.strip { height: 44px; background: #eef1f5; text-align: center; line-height: 41px; font-size: 16px; letter-spacing: -.4px; }
.air { display: flex; padding: 10px 0 0 5px; height: 141px; }
.air > div { width: 158px; text-align: center; }
.ring { position: relative; height: 74px; }
.ring p { position: absolute; left: 0; right: 0; top: 23px; font-size: 15.500px; line-height: 13px; letter-spacing: -.4px; }
.ring sup { font-size: 9px; line-height: 0; }
.an { font-size: 16px; margin-top: 9px; letter-spacing: -.4px; }
.an small { font-size: 13px; letter-spacing: 0; }
.ag { font-size: 15px; margin-top: 9px; }
.ag em { margin: 0 0 0 3px; vertical-align: 0; }
.src { text-align: right; font-size: 14px; height: 28px; line-height: 34px; padding-right: 5px; letter-spacing: -.3px; white-space: nowrap; }
.near { margin-top: 15px; height: 20px; display: flex; justify-content: space-between; align-items: center; font-size: 15px; }
.near span { margin-top: -2px; letter-spacing: -.45px; }
.near i { font-size: 11px; display: inline-block; width: 13px; }
.near div { display: flex; gap: 2px; }
.near button { height: 20px; width: 63px; border: 1px solid #3d74c9; border-radius: 3px; color: #5586ce; background: #fff; font-size: 13px; }
.near .on { width: 55px; background: #0099e5; color: #fff; font-weight: 700; }
.stn { height: 29px; line-height: 30px; display: flex; justify-content: space-between; padding: 0 5px; font-size: 13px; letter-spacing: -.3px; }
.stn b { font-weight: 500; font-size: 13.500px; letter-spacing: -.35px; }
table { width: 484px; border-collapse: collapse; table-layout: fixed; font-size: 14px; text-align: center; letter-spacing: -.3px; }
th, td { border: 1px solid #c9ccd0; height: 30.500px; padding: 0 0 3px; font-weight: 400; }
th { background: #eef1f4; }
.w1 { width: 149px; } .w2 { width: 189px; } .w3 { width: 60px; }
.note { font-size: 13px; padding: 6px 0 0 5px; letter-spacing: -.4px; }
</style>
